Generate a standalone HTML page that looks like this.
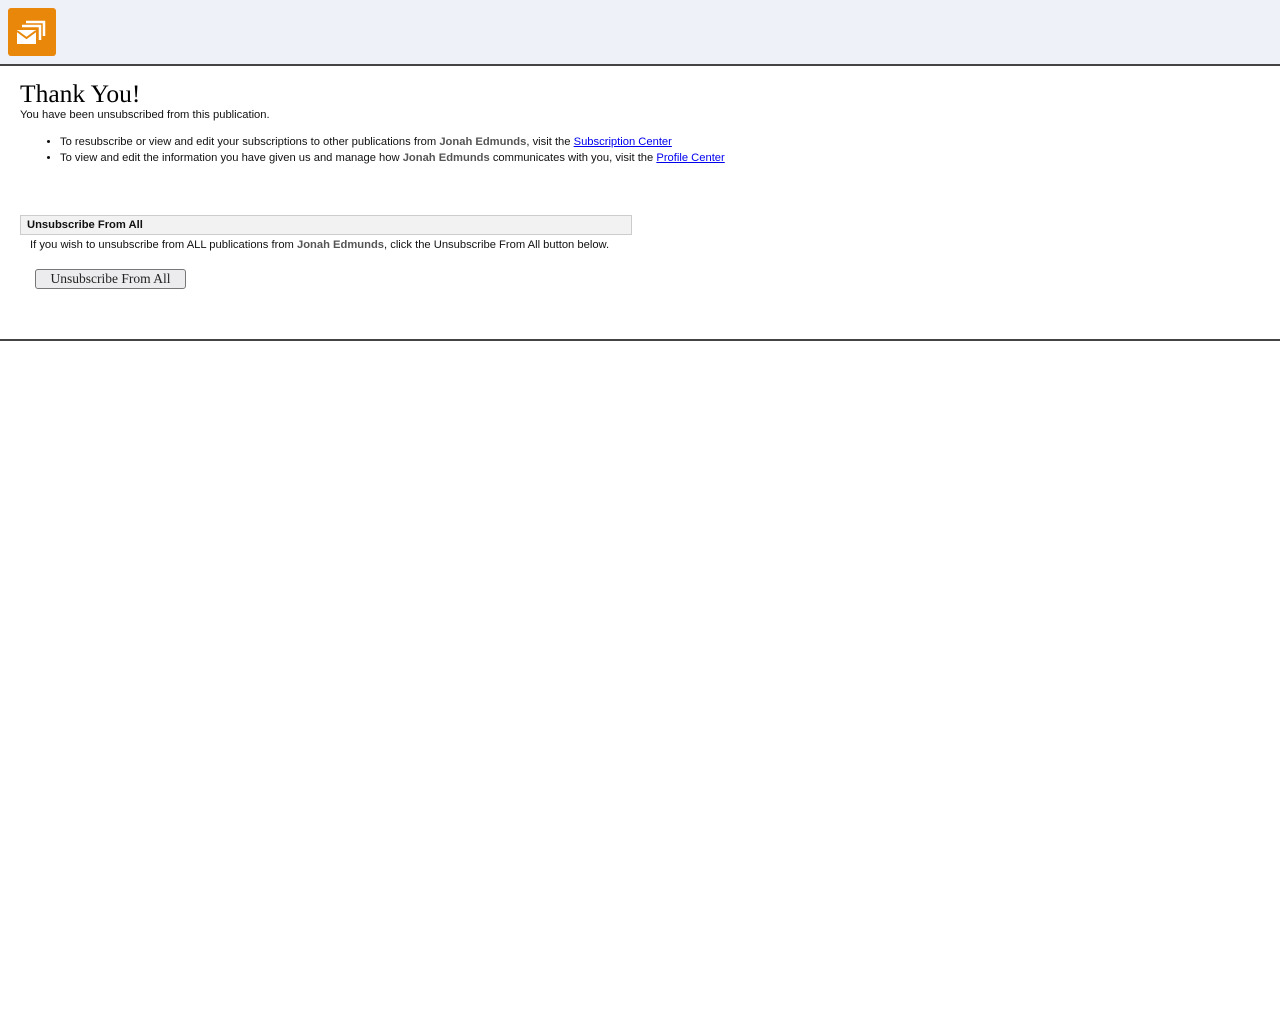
<!DOCTYPE html>
<html><head><style>
body{margin:0;font-family:"Liberation Sans",sans-serif;font-size:11.2px;color:#111;background:#fff;position:relative;height:1024px}
.hdr{height:64px;background:#eef1f8;border-bottom:2px solid #444;position:relative}
.logo{position:absolute;left:8px;top:8px;width:48px;height:48px;background:#e8870a;border-radius:3px}
.main{height:273px;border-bottom:2px solid #444}
h1{position:absolute;left:20px;top:80px;margin:0;font-family:"Liberation Serif",serif;font-weight:normal;font-size:25.5px;line-height:28px;color:#000}
.p{position:absolute;left:20px;top:108px;line-height:14px}
ul{position:absolute;left:20px;top:134px;margin:0;padding-left:40px;line-height:16px}
b{color:#555}
a{color:#00e}
.box{position:absolute;left:20px;top:215px;background:#f2f2f2;border:1px solid #ccc;font-weight:bold;line-height:18px;padding-left:6px;box-sizing:border-box;width:612px;height:20px}
.p2{position:absolute;left:30px;top:238px;line-height:14px}
button{position:absolute;left:35px;top:269px;width:151px;height:20px;font-family:"Liberation Serif",serif;font-size:13.5px;background:#ececee;border:1px solid #777;border-radius:3px;padding:0;color:#222}
</style></head><body>
<div class="hdr"><div class="logo"><svg width="48" height="48" viewBox="0 0 48 48"><path d="M18 14h18v14" fill="none" stroke="#fff" stroke-width="2.5"/><path d="M14 18h18v14" fill="none" stroke="#fff" stroke-width="2.5"/><rect x="9" y="22" width="19" height="14" fill="#fff"/><path d="M9 23l9.5 7 9.5-7" fill="none" stroke="#e8870a" stroke-width="2"/></svg></div></div>
<div class="main"></div>
<h1>Thank You!</h1>
<div class="p">You have been unsubscribed from this publication.</div>
<ul><li>To resubscribe or view and edit your subscriptions to other publications from <b>Jonah Edmunds</b>, visit the <a href="#">Subscription Center</a></li>
<li>To view and edit the information you have given us and manage how <b>Jonah Edmunds</b> communicates with you, visit the <a href="#">Profile Center</a></li></ul>
<div class="box">Unsubscribe From All</div>
<div class="p2">If you wish to unsubscribe from ALL publications from <b>Jonah Edmunds</b>, click the Unsubscribe From All button below.</div>
<button>Unsubscribe From All</button>
</body></html>
